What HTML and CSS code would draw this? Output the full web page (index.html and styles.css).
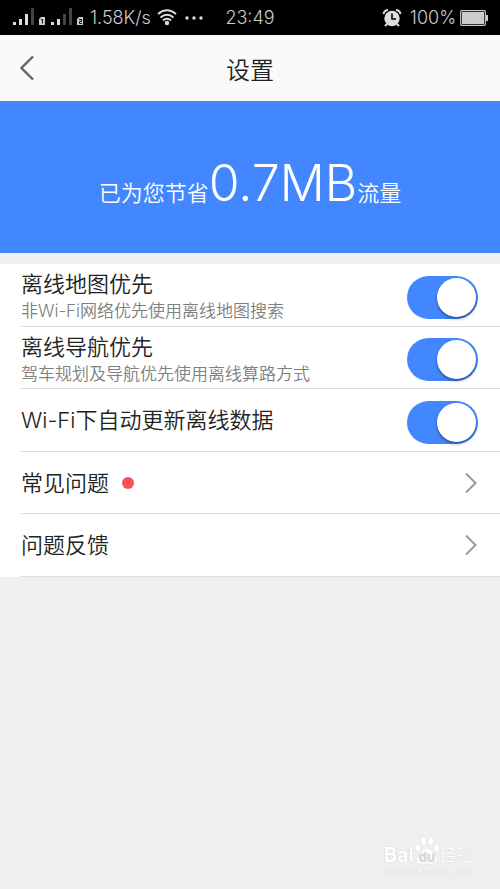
FILE: index.html
```html
<!DOCTYPE html>
<html lang="zh-CN">
<head>
<meta charset="utf-8">
<meta name="viewport" content="width=device-width, initial-scale=1">
<title>设置</title>
<link rel="stylesheet" href="styles.css">
</head>
<body>
<div class="status">
  <div class="status-side">
    <svg class="signals" width="72" height="20" viewBox="0 0 72 20" aria-hidden="true">
      <g fill="#ddd"><path d="M1 14h3v3H1zM7 11h3v6H7zM13 6h3v11h-3zM39 14h3v3h-3zM45 11h3v6h-3z"/></g>
      <path fill="#444" d="M19 0h3v17h-3zM51 6h3v11h-3zM57 0h3v17h-3z"/>
      <path fill="#ccc" d="M29 9h4v8h-6v-6zM67 9h4v8h-6v-6z"/>
      <path fill="none" stroke="#111" d="M29 11.500h1.500v4M67 11.500h2.500v2h-2v2h2.500"/>
    </svg>
    <span>1.58K/s</span>
    <svg class="wifi" width="20" height="17" viewBox="0 0 20 17" fill="none" stroke="#ddd" stroke-width="2" aria-hidden="true">
      <path d="M1 5Q10-2.500 19 5M3.500 8.500q6.500-5.500 13 0M6 11.500q4-3.500 8 0"/>
      <circle cx="10" cy="14" r="2.200" fill="#ddd" stroke="none"/>
    </svg>
    <svg class="more" width="18" height="4" viewBox="0 0 18 4" fill="#ddd" aria-hidden="true"><circle cx="2" cy="2" r="1.700"/><circle cx="9" cy="2" r="1.700"/><circle cx="16" cy="2" r="1.700"/></svg>
  </div>
  <time>23:49</time>
  <div class="status-side status-end">
    <svg class="alarm" width="20" height="18" viewBox="0 0 20 18" aria-hidden="true">
      <circle cx="10" cy="9.500" r="7.700" fill="#ddd"/>
      <path d="M5 15l-2 2M15 15l2 2M1.500 5Q2 1.500 6 1M18.500 5Q18 1.500 14 1" fill="none" stroke="#ddd" stroke-width="2"/>
      <path d="M10 4.500V10h4" fill="none" stroke="#000" stroke-width="1.600"/>
    </svg>
    <span>100%</span>
    <svg width="28" height="16" viewBox="0 0 28 16" aria-hidden="true">
      <rect x=".7" y=".7" width="24.600" height="14.600" rx="1" fill="none" stroke="#ccc" stroke-width="1.200"/>
      <path d="M2 2h22v12H2zM26 5h2v6h-2z" fill="#ccc"/>
    </svg>
  </div>
</div>
<header class="nav">
  <button class="back" type="button" aria-label="返回">
    <svg width="16" height="26" viewBox="0 0 16 26" fill="none" stroke="#666" stroke-width="2.400" aria-hidden="true"><path d="M13 1.500 1.500 13 13 24.500"/></svg>
  </button>
  <h1>设置</h1>
</header>
<section class="saved"><p>已为您节省<strong>0.7MB</strong>流量</p></section>
<main class="list">
  <label class="row">
    <span class="text"><span class="name">离线地图优先</span><span class="hint">非Wi-Fi网络优先使用离线地图搜索</span></span>
    <input class="switch" type="checkbox" checked>
  </label>
  <label class="row">
    <span class="text"><span class="name">离线导航优先</span><span class="hint">驾车规划及导航优先使用离线算路方式</span></span>
    <input class="switch" type="checkbox" checked>
  </label>
  <label class="row">
    <span class="name">Wi-Fi下自动更新离线数据</span>
    <input class="switch" type="checkbox" checked>
  </label>
  <a class="row" href="#faq">
    <span class="name">常见问题</span><span class="dot"></span>
    <svg class="chevron" width="13" height="22" viewBox="0 0 13 22" aria-hidden="true"><path d="M1 1.500 10.500 11 1 20.500"/></svg>
  </a>
  <a class="row" href="#feedback">
    <span class="name">问题反馈</span>
    <svg class="chevron" width="13" height="22" viewBox="0 0 13 22" aria-hidden="true"><path d="M1 1.500 10.500 11 1 20.500"/></svg>
  </a>
</main>
<footer class="mark">
  <div class="brand">
    <span>Bai</span>
    <svg width="26" height="30" viewBox="0 0 26 30" aria-hidden="true">
      <g fill="#fff" stroke="#ddd" stroke-width=".6">
        <ellipse cx="4" cy="12" rx="3" ry="4"/><ellipse cx="9.500" cy="5" rx="3" ry="4.200"/><ellipse cx="17" cy="5" rx="3" ry="4.200"/><ellipse cx="22.500" cy="12" rx="3" ry="4"/>
        <path d="M13 12c4 0 5 4 8 7 4 4 3 9-2 9H7c-5 0-6-5-2-9 3-3 4-7 8-7z"/>
      </g>
      <text class="du" x="13" y="26" text-anchor="middle">du</text>
    </svg>
    <span class="brand-cn">经验</span>
  </div>
  <div class="site">jingyan.baidu.com</div>
</footer>
</body>
</html>
```
FILE: styles.css
```css
* { box-sizing: border-box; }

body {
  margin: 0;
  min-height: 100vh;
  display: flex;
  flex-direction: column;
  background: #efefef;
  color: #222;
  font-family: Inter, "Noto Sans CJK SC", sans-serif;
  font-weight: 350;
}

.status {
  display: grid;
  grid-template-columns: 1fr auto 1fr;
  align-items: center;
  height: 35px;
  padding: 0 12px;
  background: #000;
  color: #ccc;
  font-size: 18px;
  font-weight: 300;
}

.status-side { display: flex; align-items: center; }
.status-end { justify-content: flex-end; gap: 4px; }
.alarm { margin-right: 4px; }
.signals { margin-right: 6px; }
.wifi { margin: 0 8px 0 6px; }

.nav {
  display: grid;
  grid-template-columns: 1fr auto 1fr;
  align-items: center;
  height: 66px;
  padding: 0 12px;
  background: #fafafa;
}

.back {
  justify-self: start;
  display: flex;
  padding: 8px;
  border: 0;
  background: none;
}

h1 {
  margin: 0;
  font-size: 24px;
  font-weight: 350;
}

.saved {
  height: 152px;
  padding-top: 52px;
  margin-bottom: 11px;
  background: #4287ff;
  color: #fff;
  text-align: center;
}

.saved p {
  margin: 0;
  font-size: 22px;
  line-height: 60px;
}

.saved strong {
  font-size: 50px;
  font-weight: 300;
}

.list {
  display: grid;
  grid-template-rows: repeat(5, 1fr);
  height: 313px;
  background: #fff;
}

.row {
  display: flex;
  align-items: center;
  margin-left: 21px;
  padding-right: 22px;
  border-bottom: 1px solid #ddd;
  color: inherit;
  text-decoration: none;
}

.text {
  display: flex;
  flex-direction: column;
  padding-top: 3px;
}

.name {
  font-size: 22px;
  line-height: 30px;
}

.hint {
  color: #808080;
  font-size: 17px;
  line-height: 24px;
}

.switch {
  appearance: none;
  display: flex;
  justify-content: flex-end;
  align-items: center;
  width: 71px;
  height: 43px;
  margin: 5px 0 0 auto;
  padding-right: 2px;
  border-radius: 22px;
  background: #4287ff;
}

.switch::before {
  content: "";
  width: 39px;
  height: 39px;
  border-radius: 50%;
  background: #fff;
  box-shadow: 0 2px 3px #0006;
}

.switch:not(:checked) {
  justify-content: flex-start;
  padding-left: 2px;
  background: #ccc;
}

.dot {
  width: 12px;
  height: 12px;
  margin-left: 13px;
  border-radius: 50%;
  background: #fa5055;
}

.chevron {
  margin-left: auto;
  fill: none;
  stroke: #999;
  stroke-width: 2;
}

.mark {
  align-self: flex-end;
  margin: auto 28px 11px 0;
  color: #fff;
  text-align: center;
}

.brand {
  display: flex;
  align-items: flex-end;
  font-size: 20px;
  font-weight: 700;
  line-height: 22px;
  text-shadow: 0 0 1px #bbb;
}

.brand-cn {
  font-size: 16px;
  font-weight: 400;
}

.du {
  fill: #ddd;
  font-size: 13px;
  font-weight: 700;
}

.site {
  color: #e4e4e4;
  font-size: 10px;
  line-height: 12px;
}
```
